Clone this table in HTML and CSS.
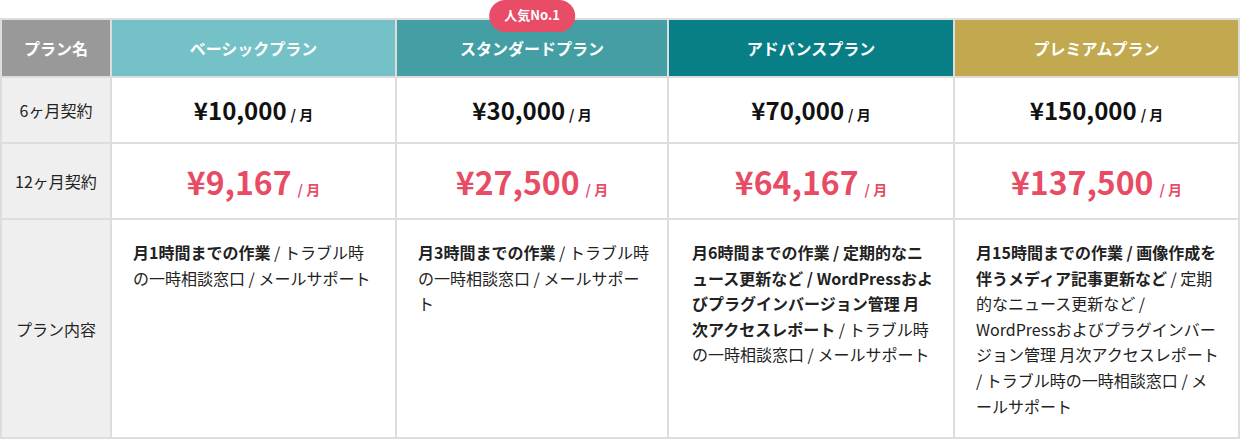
FILE: index.html
```html
<!DOCTYPE html>
<html lang="ja">
<head>
<meta charset="utf-8">
<title>料金プラン</title>
<link rel="stylesheet" href="styles.css">
</head>
<body>
<div class="page">
  <div class="plans">
    <div class="cell head head-label">プラン名</div>
    <div class="cell head head-basic">ベーシックプラン</div>
    <div class="cell head head-standard"><span class="badge">人気No.1</span>スタンダードプラン</div>
    <div class="cell head head-advanced">アドバンスプラン</div>
    <div class="cell head head-premium">プレミアムプラン</div>

    <div class="cell label">6ヶ月契約</div>
    <div class="cell price"><span class="amount">¥10,000</span><span class="unit">/ 月</span></div>
    <div class="cell price"><span class="amount">¥30,000</span><span class="unit">/ 月</span></div>
    <div class="cell price"><span class="amount">¥70,000</span><span class="unit">/ 月</span></div>
    <div class="cell price"><span class="amount">¥150,000</span><span class="unit">/ 月</span></div>

    <div class="cell label">12ヶ月契約</div>
    <div class="cell price price-red"><span class="amount">¥9,167</span><span class="unit">/ 月</span></div>
    <div class="cell price price-red"><span class="amount">¥27,500</span><span class="unit">/ 月</span></div>
    <div class="cell price price-red"><span class="amount">¥64,167</span><span class="unit">/ 月</span></div>
    <div class="cell price price-red"><span class="amount">¥137,500</span><span class="unit">/ 月</span></div>

    <div class="cell label">プラン内容</div>
    <div class="cell desc"><strong>月1時間までの作業</strong> / トラブル時の一時相談窓口 / メールサポート</div>
    <div class="cell desc"><strong>月3時間までの作業</strong> / トラブル時の一時相談窓口 / メールサポート</div>
    <div class="cell desc desc-advanced"><strong>月6時間までの作業 / 定期的なニュース更新など / WordPressおよびプラグインバージョン管理 月次アクセスレポート</strong> / トラブル時の一時相談窓口 / メールサポート</div>
    <div class="cell desc"><strong>月15時間までの作業 / 画像作成を伴うメディア記事更新など</strong> / 定期的なニュース更新など / WordPressおよびプラグインバージョン管理 月次アクセスレポート / トラブル時の一時相談窓口 / メールサポート</div>
  </div>
</div>
</body>
</html>
```
FILE: styles.css
```css
html, body {
  margin: 0;
  padding: 0;
  background: #ffffff;
}

body {
  font-family: "Noto Sans CJK JP", "Noto Sans", sans-serif;
  color: #222222;
}

.page {
  padding-top: 18px;
  width: 1240px;
}

.plans {
  display: grid;
  grid-template-columns: 108px 283px 270px 284px 283px;
  grid-template-rows: 56px 64px 74px 217px;
  gap: 2px;
  padding: 2px;
  background: #dddddd;
  width: 1240px;
  box-sizing: border-box;
}

.cell {
  background: #ffffff;
  box-sizing: border-box;
}

.head {
  display: flex;
  align-items: center;
  justify-content: center;
  color: #ffffff;
  font-size: 16px;
  font-weight: 700;
  position: relative;
}

.head-label { background: #999999; }
.head-basic { background: #74c1c7; }
.head-standard { background: #449fa5; }
.head-advanced { background: #087f86; }
.head-premium { background: #c2a84e; }

.badge {
  position: absolute;
  top: -20px;
  left: 50%;
  transform: translateX(-50%);
  height: 32px;
  line-height: 30px;
  padding: 0 15px;
  border-radius: 16px;
  background: #e84c66;
  color: #ffffff;
  font-size: 13px;
  font-weight: 700;
  white-space: nowrap;
}

.label {
  background: #efefef;
  display: flex;
  align-items: center;
  justify-content: center;
  font-size: 16px;
  color: #222222;
}

.price {
  display: flex;
  align-items: baseline;
  justify-content: center;
  padding-top: 1px;
  font-weight: 700;
  color: #111111;
  align-content: center;
  flex-wrap: wrap;
}

.amount {
  font-size: 24px;
  line-height: 1;
}

.unit {
  font-size: 14px;
  margin-left: 4px;
}

.price-red {
  color: #e84c64;
}

.price-red .amount {
  font-size: 32px;
}

.price-red .unit {
  margin-left: 6px;
}

.desc {
  padding: 20px 18px 0 21px;
  font-size: 16px;
  line-height: 25.6px;
  color: #222222;
}

.desc-advanced {
  padding-left: 23px;
}

.desc strong {
  font-weight: 700;
}
```
